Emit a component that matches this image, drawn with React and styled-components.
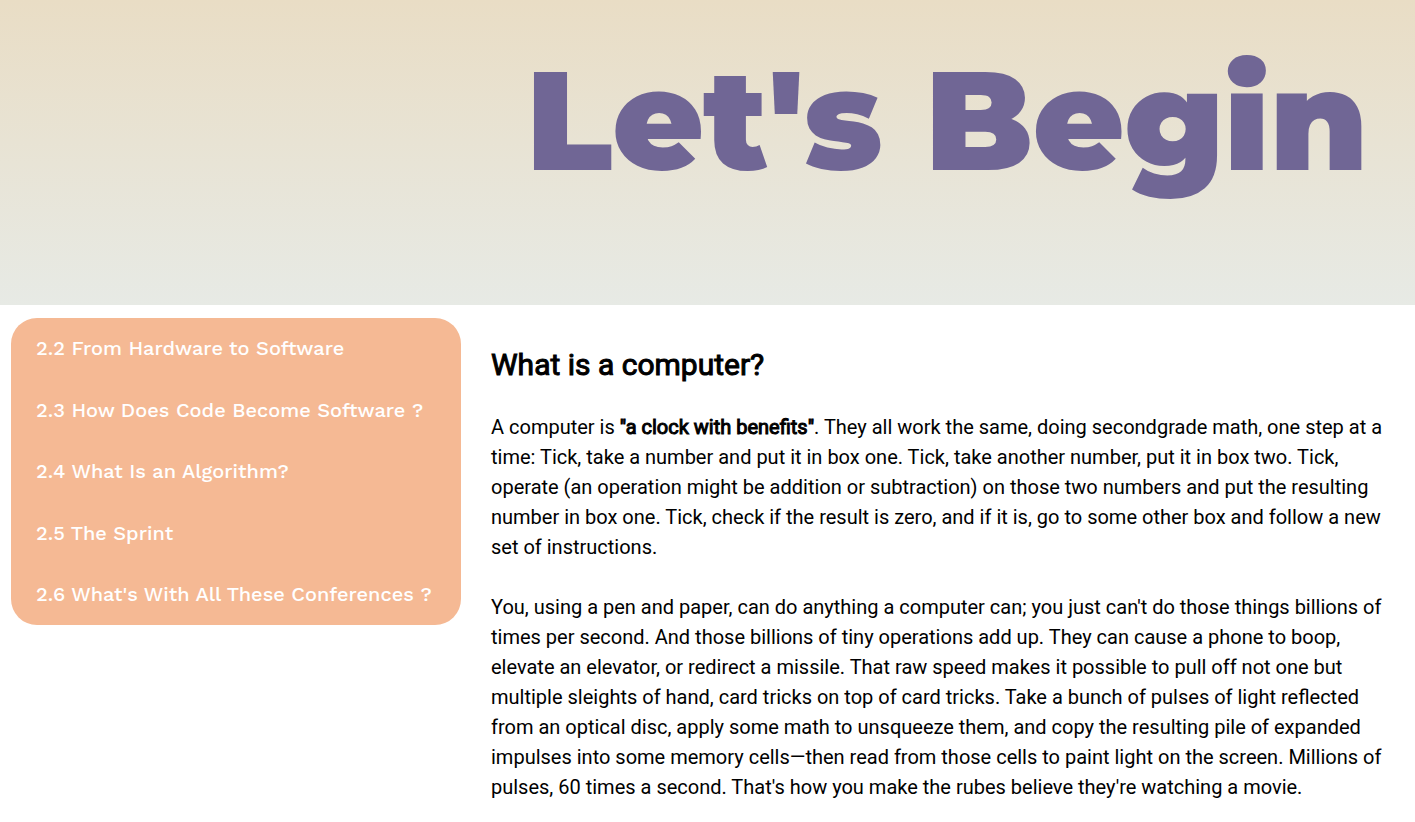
import React from "react";
import styled, { createGlobalStyle } from "styled-components";

const GlobalStyle = createGlobalStyle`
  *, *::before, *::after { box-sizing: border-box; }
  body { margin: 0; background: #fff; color: #000; font-family: Roboto, sans-serif; }
`;

const Banner = styled.header`
  padding: 32px 47px 97px;
  background: linear-gradient(#e9ddc5, #e7eae5);
`;

const Title = styled.h1`
  margin: 0;
  font-family: Montserrat, Inter, sans-serif;
  font-size: 140px;
  font-weight: 900;
  line-height: 176px;
  text-align: right;
  white-space: nowrap;
  color: #706695;
`;

const Layout = styled.div`
  display: flex;
  align-items: flex-start;
  gap: 30px;
  padding: 13px 31px 0 11px;
`;

const SideNav = styled.nav`
  flex: none;
  width: 450px;
  border-radius: 26px;
  background: #f5b994;
`;

const NavList = styled.ul`
  display: flex;
  flex-direction: column;
  justify-content: space-between;
  min-height: 307px;
  margin: 0;
  padding: 0 25px;
  list-style: none;
`;

const NavLink = styled.a`
  display: block;
  padding: 18px 0;
  font-family: "Work Sans", Inter, sans-serif;
  font-size: 20px;
  font-weight: 500;
  line-height: 25px;
  white-space: nowrap;
  color: #fff;
  text-decoration: none;
`;

const Article = styled.main`
  flex: 1;
  min-width: 0;
  padding-top: 29px;
`;

const Heading = styled.h2`
  margin: 0 0 30px;
  font-size: 30px;
  font-weight: 400;
  line-height: 35px;
  -webkit-text-stroke: 1px currentColor;
`;

const Paragraph = styled.p`
  margin: 0 0 30px;
  font-size: 20px;
  line-height: 30px;
`;

const Strong = styled.strong`
  font-weight: 400;
  -webkit-text-stroke: 1px currentColor;
`;

const topics = [
  "2.2 From Hardware to Software",
  "2.3 How Does Code Become Software ?",
  "2.4 What Is an Algorithm?",
  "2.5 The Sprint",
  "2.6 What's With All These Conferences ?",
];

export default function App() {
  return (
    <>
      <GlobalStyle />
      <Banner>
        <Title>Let's Begin</Title>
      </Banner>
      <Layout>
        <SideNav aria-label="Topics">
          <NavList>
            {topics.map((topic) => (
              <li key={topic}>
                <NavLink href="#">{topic}</NavLink>
              </li>
            ))}
          </NavList>
        </SideNav>
        <Article>
          <Heading>What is a computer?</Heading>
          <Paragraph>
            A computer is <Strong>"a clock with benefits"</Strong>. They all work the same, doing
            secondgrade math, one step at a time: Tick, take a number and put it in box one. Tick,
            take another number, put it in box two. Tick, operate (an operation might be addition or
            subtraction) on those two numbers and put the resulting number in box one. Tick, check
            if the result is zero, and if it is, go to some other box and follow a new set of
            instructions.
          </Paragraph>
          <Paragraph>
            You, using a pen and paper, can do anything a computer can; you just can't do those
            things billions of times per second. And those billions of tiny operations add up. They
            can cause a phone to boop, elevate an elevator, or redirect a missile. That raw speed
            makes it possible to pull off not one but multiple sleights of hand, card tricks on top
            of card tricks. Take a bunch of pulses of light reflected from an optical disc, apply
            some math to unsqueeze them, and copy the resulting pile of expanded impulses into some
            memory cells—then read from those cells to paint light on the screen. Millions of
            pulses, 60 times a second. That's how you make the rubes believe they're watching a
            movie.
          </Paragraph>
        </Article>
      </Layout>
    </>
  );
}
